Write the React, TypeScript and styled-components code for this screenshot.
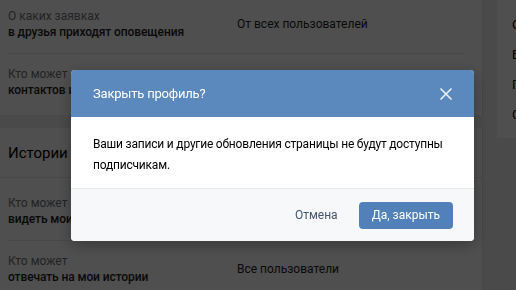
import React from "react";
import styled, { createGlobalStyle } from "styled-components";

const Global = createGlobalStyle`
  html, body { margin: 0; padding: 0; }
  body {
    width: 516px;
    height: 290px;
    overflow: hidden;
    background: #edeef0;
    font-family: Roboto, "Open Sans", "Liberation Sans", sans-serif;
    -webkit-font-smoothing: antialiased;
  }
`;

const Page = styled.div`
  display: flex;
  align-items: flex-start;
  gap: 14px;
  margin-top: -4px;
  height: 294px;
  overflow: hidden;
`;

const Main = styled.div`
  width: 483px;
  flex: none;
  display: flex;
  flex-direction: column;
  gap: 13px;
`;

const Card = styled.div`
  background: #fff;
  border-right: 1px solid #dce1e6;
  padding: 0 18px 4px 8px;
`;

const Row = styled.div<{ $last?: boolean }>`
  display: grid;
  grid-template-columns: 229px 1fr;
  align-items: center;
  padding: 12px 0 13px;
  border-bottom: ${(p) => (p.$last ? "none" : "1px solid #e7e8ec")};
`;

const Label = styled.div`
  font-size: 12px;
  line-height: 16px;
`;

const LabelTop = styled.div`
  color: #6f7276;
`;

const LabelBold = styled.div`
  color: #222;
  font-weight: 500;
  letter-spacing: -0.1px;
`;

const Value = styled.div`
  font-size: 12px;
  line-height: 16px;
  color: #222;
`;

const SectionHeader = styled.div`
  margin: 0 -18px 0 -8px;
  padding: 15px 8px 14px;
  font-size: 15px;
  line-height: 20px;
  color: #000;
  border-bottom: 1px solid #e7e8ec;
`;

const Rows = styled.div`
  padding-top: 5px;
`;

const Side = styled.div`
  width: 200px;
  flex: none;
  background: #fff;
  margin-top: -20px;
  padding: 42px 0 16px 15px;
  display: flex;
  flex-direction: column;
  gap: 16px;
`;

const SideItem = styled.div`
  font-size: 13px;
  line-height: 14px;
  color: #000;
`;

const Overlay = styled.div`
  position: fixed;
  inset: 0;
  background: rgba(0, 0, 0, 0.69);
  display: flex;
  align-items: flex-start;
  padding: 70px 0 0 71px;
`;

const Modal = styled.div`
  width: 403px;
  border-radius: 4px;
  overflow: hidden;
  background: #fff;
  box-shadow: 0 4px 16px rgba(0, 0, 0, 0.3);
`;

const ModalHeader = styled.div`
  height: 47px;
  background: #5b88bd;
  display: flex;
  align-items: center;
  justify-content: space-between;
  padding: 0 22px 0 22px;
  box-sizing: border-box;
`;

const ModalTitle = styled.div`
  color: #fff;
  font-size: 13px;
  line-height: 18px;
  letter-spacing: -0.2px;
`;

const CloseBtn = styled.button`
  border: none;
  background: none;
  padding: 0;
  width: 12px;
  height: 12px;
  display: flex;
  align-items: center;
  justify-content: center;
  opacity: 0.85;
`;

const ModalBody = styled.div`
  padding: 17px 22px 12px;
  font-size: 12px;
  line-height: 21px;
  letter-spacing: -0.2px;
  color: #000;
  white-space: nowrap;
`;

const ModalFooter = styled.div`
  background: #f7f8fa;
  border-top: 1px solid #e7e8ec;
  display: flex;
  justify-content: flex-end;
  align-items: center;
  gap: 8px;
  padding: 13px 21px 12px;
`;

const Btn = styled.button<{ $primary?: boolean }>`
  font-family: inherit;
  font-size: 12px;
  line-height: 15px;
  height: 27px;
  padding: 0 13px;
  border: none;
  border-radius: 4px;
  background: ${(p) => (p.$primary ? "#5181b8" : "transparent")};
  color: ${(p) => (p.$primary ? "#fff" : "#45566b")};
`;

const rows1 = [
  { top: "О каких заявках", bold: "в друзья приходят оповещения", value: "От всех пользователей" },
  { top: "Кто может видеть список моих", bold: "контактов и подписчиков", value: "" },
];

const rows2 = [
  { top: "Кто может", bold: "видеть мои истории", value: "Все пользователи" },
  { top: "Кто может", bold: "отвечать на мои истории", value: "Все пользователи" },
];

export default function App() {
  return (
    <>
      <Global />
      <Page>
        <Main>
          <Card>
            {rows1.map((r, i) => (
              <Row key={i} $last={i === rows1.length - 1}>
                <Label>
                  <LabelTop>{r.top}</LabelTop>
                  <LabelBold>{r.bold}</LabelBold>
                </Label>
                <Value>{r.value}</Value>
              </Row>
            ))}
          </Card>
          <Card>
            <SectionHeader>Истории</SectionHeader>
            <Rows>
              {rows2.map((r, i) => (
                <Row key={i} $last={i === rows2.length - 1}>
                  <Label>
                    <LabelTop>{r.top}</LabelTop>
                    <LabelBold>{r.bold}</LabelBold>
                  </Label>
                  <Value>{r.value}</Value>
                </Row>
              ))}
            </Rows>
          </Card>
        </Main>
        <Side>
          <SideItem>Общее</SideItem>
          <SideItem>Безопасность</SideItem>
          <SideItem>Приватность</SideItem>
          <SideItem>Оповещения</SideItem>
        </Side>
      </Page>
      <Overlay>
        <Modal>
          <ModalHeader>
            <ModalTitle>Закрыть профиль?</ModalTitle>
            <CloseBtn aria-label="Закрыть">
              <svg width="12" height="12" viewBox="0 0 12 12">
                <path d="M1 1L11 11M11 1L1 11" stroke="#fff" strokeWidth="1.7" strokeLinecap="round" />
              </svg>
            </CloseBtn>
          </ModalHeader>
          <ModalBody>
            Ваши записи и другие обновления страницы не будут доступны
            <br />
            подписчикам.
          </ModalBody>
          <ModalFooter>
            <Btn>Отмена</Btn>
            <Btn $primary>Да, закрыть</Btn>
          </ModalFooter>
        </Modal>
      </Overlay>
    </>
  );
}
